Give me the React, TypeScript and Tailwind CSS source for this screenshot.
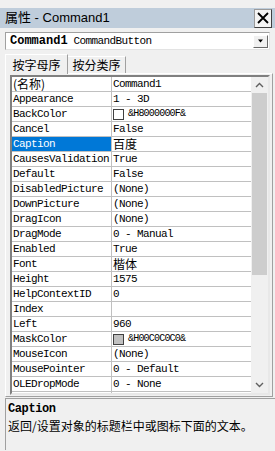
import React from "react";

const mono = { fontFamily: '"Liberation Mono", "Noto Sans CJK SC", monospace' };

type Row = { name: string; value: string; swatch?: string; cjk?: boolean; sel?: boolean };

const rows: Row[] = [
  { name: "(名称)", value: "Command1" },
  { name: "Appearance", value: "1 - 3D" },
  { name: "BackColor", value: "&H8000000F&", swatch: "#ffffff" },
  { name: "Cancel", value: "False" },
  { name: "Caption", value: "百度", cjk: true, sel: true },
  { name: "CausesValidation", value: "True" },
  { name: "Default", value: "False" },
  { name: "DisabledPicture", value: "(None)" },
  { name: "DownPicture", value: "(None)" },
  { name: "DragIcon", value: "(None)" },
  { name: "DragMode", value: "0 - Manual" },
  { name: "Enabled", value: "True" },
  { name: "Font", value: "楷体", cjk: true },
  { name: "Height", value: "1575" },
  { name: "HelpContextID", value: "0" },
  { name: "Index", value: "" },
  { name: "Left", value: "960" },
  { name: "MaskColor", value: "&H00C0C0C0&", swatch: "#c0c0c0" },
  { name: "MouseIcon", value: "(None)" },
  { name: "MousePointer", value: "0 - Default" },
  { name: "OLEDropMode", value: "0 - None" },
  { name: "Picture", value: "(None)" },
];

export default function App() {
  return (
    <div className="relative w-[275px] h-[451px] overflow-hidden bg-[#f0f0f0] text-black" style={{ fontFamily: '"Noto Sans CJK SC", sans-serif' }}>
      <div className="h-[8px]" />
      {/* title bar */}
      <div className="h-[20px] bg-[#bfcddb] flex items-center justify-between pl-[5px] pr-[3px]">
        <span className="text-[13px] leading-[16px] text-black" style={{ fontFamily: '"Liberation Sans", "Noto Sans CJK SC", sans-serif' }}>属性 - Command1</span>
        <div className="w-[18px] h-[19px] bg-[#f4f4f4] border border-[#9a9a9a] border-r-[#404040] border-b-[#404040] flex items-center justify-center">
          <svg width="12" height="12" viewBox="0 0 12 12">
            <path d="M1 1 L11 11 M11 1 L1 11" stroke="#000" strokeWidth="1.8" />
          </svg>
        </div>
      </div>
      {/* object combo */}
      <div className="mt-[4px] ml-[5px] w-[265px] h-[18px] bg-white border border-[#a0a0a0] border-b-[#e3e3e3] border-r-[#e3e3e3] flex items-center">
        <div className="flex-1 flex items-center pl-[4px] whitespace-nowrap overflow-hidden">
          <span className="text-[12px] font-bold leading-[14px]" style={mono}>Command1</span>
          <span className="text-[11px] leading-[14px] tracking-[-0.6px] ml-[6px]" style={mono}>CommandButton</span>
        </div>
        <div className="w-[15px] h-[13px] mr-[1px] bg-[#f0f0f0] border border-white border-r-[#696969] border-b-[#696969] flex items-center justify-center">
          <svg width="7" height="4" viewBox="0 0 7 4"><path d="M1 0.5 H6 L3.5 3.5 Z" fill="#000" /></svg>
        </div>
      </div>
      {/* tabs */}
      <div className="mt-[4px] ml-[5px] h-[20px] flex items-end relative z-10">
        <div className="h-[20px] w-[63px] border border-b-0 border-white border-r-[#a0a0a0] bg-[#f0f0f0] flex items-center justify-center text-[12px] leading-[14px]">按字母序</div>
        <div className="h-[17px] w-[58px] border border-b-0 border-white border-l-0 border-r-[#a0a0a0] flex items-center justify-center text-[12px] leading-[14px] mb-[1px]">按分类序</div>
      </div>
      {/* tab panel */}
      <div className="ml-[5px] w-[268px] h-[324px] border border-white border-r-[#a0a0a0] border-b-[#a0a0a0] -mt-[1px] pt-[1px] pl-[4px]">
        <div className="w-[260px] h-[320px] border-2 border-[#808080] border-r-[#e8e8e8] border-b-[#e8e8e8] flex overflow-hidden bg-white">
          <div className="flex-1 flex flex-col overflow-hidden">
            {rows.map((r) => (
              <div key={r.name} className="h-[15px] shrink-0 flex border-b border-[#c0c0c0]">
                <div
                  className={`w-[100px] shrink-0 border-r border-[#c0c0c0] pl-[1px] flex items-center whitespace-nowrap overflow-hidden ${r.sel ? "bg-[#0078d7] text-white" : ""}`}
                >
                  {r.name.startsWith("(名") ? (
                    <span className="text-[12px] leading-[14px]">(名称)</span>
                  ) : (
                    <span className="text-[11px] leading-[14px] tracking-[-0.6px]" style={mono}>{r.name}</span>
                  )}
                </div>
                <div className="flex-1 pl-[1px] flex items-center whitespace-nowrap overflow-hidden">
                  {r.swatch && (
                    <span className="w-[11px] h-[11px] border border-[#404040] mr-[4px] shrink-0" style={{ backgroundColor: r.swatch }} />
                  )}
                  {r.cjk ? (
                    <span className="text-[12px] leading-[14px]">{r.value}</span>
                  ) : (
                    <span className={`${r.swatch ? "text-[10px] tracking-[-0.8px]" : "text-[11px] tracking-[-0.6px]"} leading-[14px]`} style={mono}>{r.value}</span>
                  )}
                </div>
              </div>
            ))}
          </div>
          {/* scrollbar */}
          <div className="w-[17px] shrink-0 bg-[#f0f0f0] flex flex-col">
            <div className="h-[16px] flex items-center justify-center">
              <svg width="9" height="6" viewBox="0 0 9 6"><path d="M1 5 L4.5 1.5 L8 5" stroke="#606060" strokeWidth="1.4" fill="none" /></svg>
            </div>
            <div className="mx-[1px] h-[182px] bg-[#cdcdcd]" />
            <div className="flex-1" />
            <div className="h-[17px] flex items-center justify-center">
              <svg width="9" height="6" viewBox="0 0 9 6"><path d="M1 1 L4.5 4.5 L8 1" stroke="#606060" strokeWidth="1.4" fill="none" /></svg>
            </div>
          </div>
        </div>
      </div>
      {/* description */}
      <div className="mt-[1px] ml-[5px] w-[270px] h-[52px] border-t border-l border-[#a0a0a0] pl-[2px] pt-[3px]">
        <div className="text-[12px] font-bold leading-[15px] tracking-[-0.4px]" style={mono}>Caption</div>
        <div className="text-[12px] leading-[18px] whitespace-nowrap">返回/设置对象的标题栏中或图标下面的文本。</div>
      </div>
    </div>
  );
}
